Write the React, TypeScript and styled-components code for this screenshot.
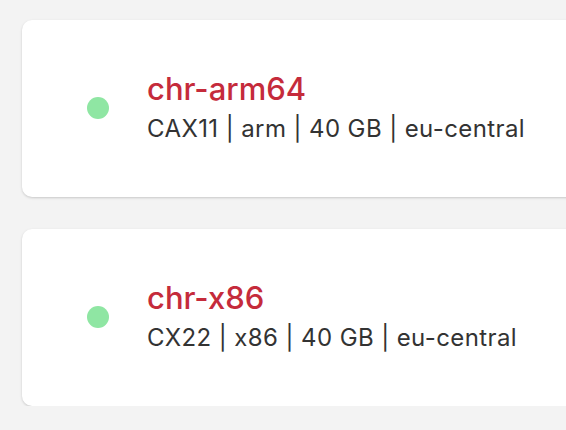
import React from "react";
import styled, { createGlobalStyle } from "styled-components";

const Global = createGlobalStyle`
  html, body { margin: 0; padding: 0; background: #f3f3f3; overflow: hidden; }
  body { font-family: Inter, "Noto Sans", sans-serif; }
`;

const Page = styled.div`
  display: flex;
  flex-direction: column;
  gap: 32px;
  padding: 20px 0 0 22px;
  width: 620px;
`;

const Card = styled.div`
  display: flex;
  align-items: center;
  gap: 38px;
  height: 177px;
  box-sizing: border-box;
  padding-left: 65px;
  padding-bottom: 2px;
  background: #ffffff;
  border-radius: 10px;
  box-shadow: 0 1px 3px rgba(0, 0, 0, 0.12), 0 1px 2px rgba(0, 0, 0, 0.06);
`;

const Dot = styled.span<{ $color: string }>`
  flex: none;
  width: 22px;
  height: 22px;
  border-radius: 50%;
  background: ${(p) => p.$color};
`;

const Info = styled.div`
  display: flex;
  flex-direction: column;
  gap: 7px;
`;

const Name = styled.div`
  color: #c52b3b;
  font-size: 31px;
  font-weight: 500;
  line-height: 36px;
`;

const Meta = styled.div`
  color: #333333;
  font-size: 24px;
  letter-spacing: 0.4px;
  line-height: 30px;
`;

const servers = [
  { name: "chr-arm64", meta: ["CAX11", "arm", "40 GB", "eu-central"] },
  { name: "chr-x86", meta: ["CX22", "x86", "40 GB", "eu-central"] },
];

export default function App() {
  return (
    <>
      <Global />
      <Page>
        {servers.map((s) => (
          <Card key={s.name}>
            <Dot $color="#8fe6a3" />
            <Info>
              <Name>{s.name}</Name>
              <Meta>{s.meta.join(" | ")}</Meta>
            </Info>
          </Card>
        ))}
      </Page>
    </>
  );
}
